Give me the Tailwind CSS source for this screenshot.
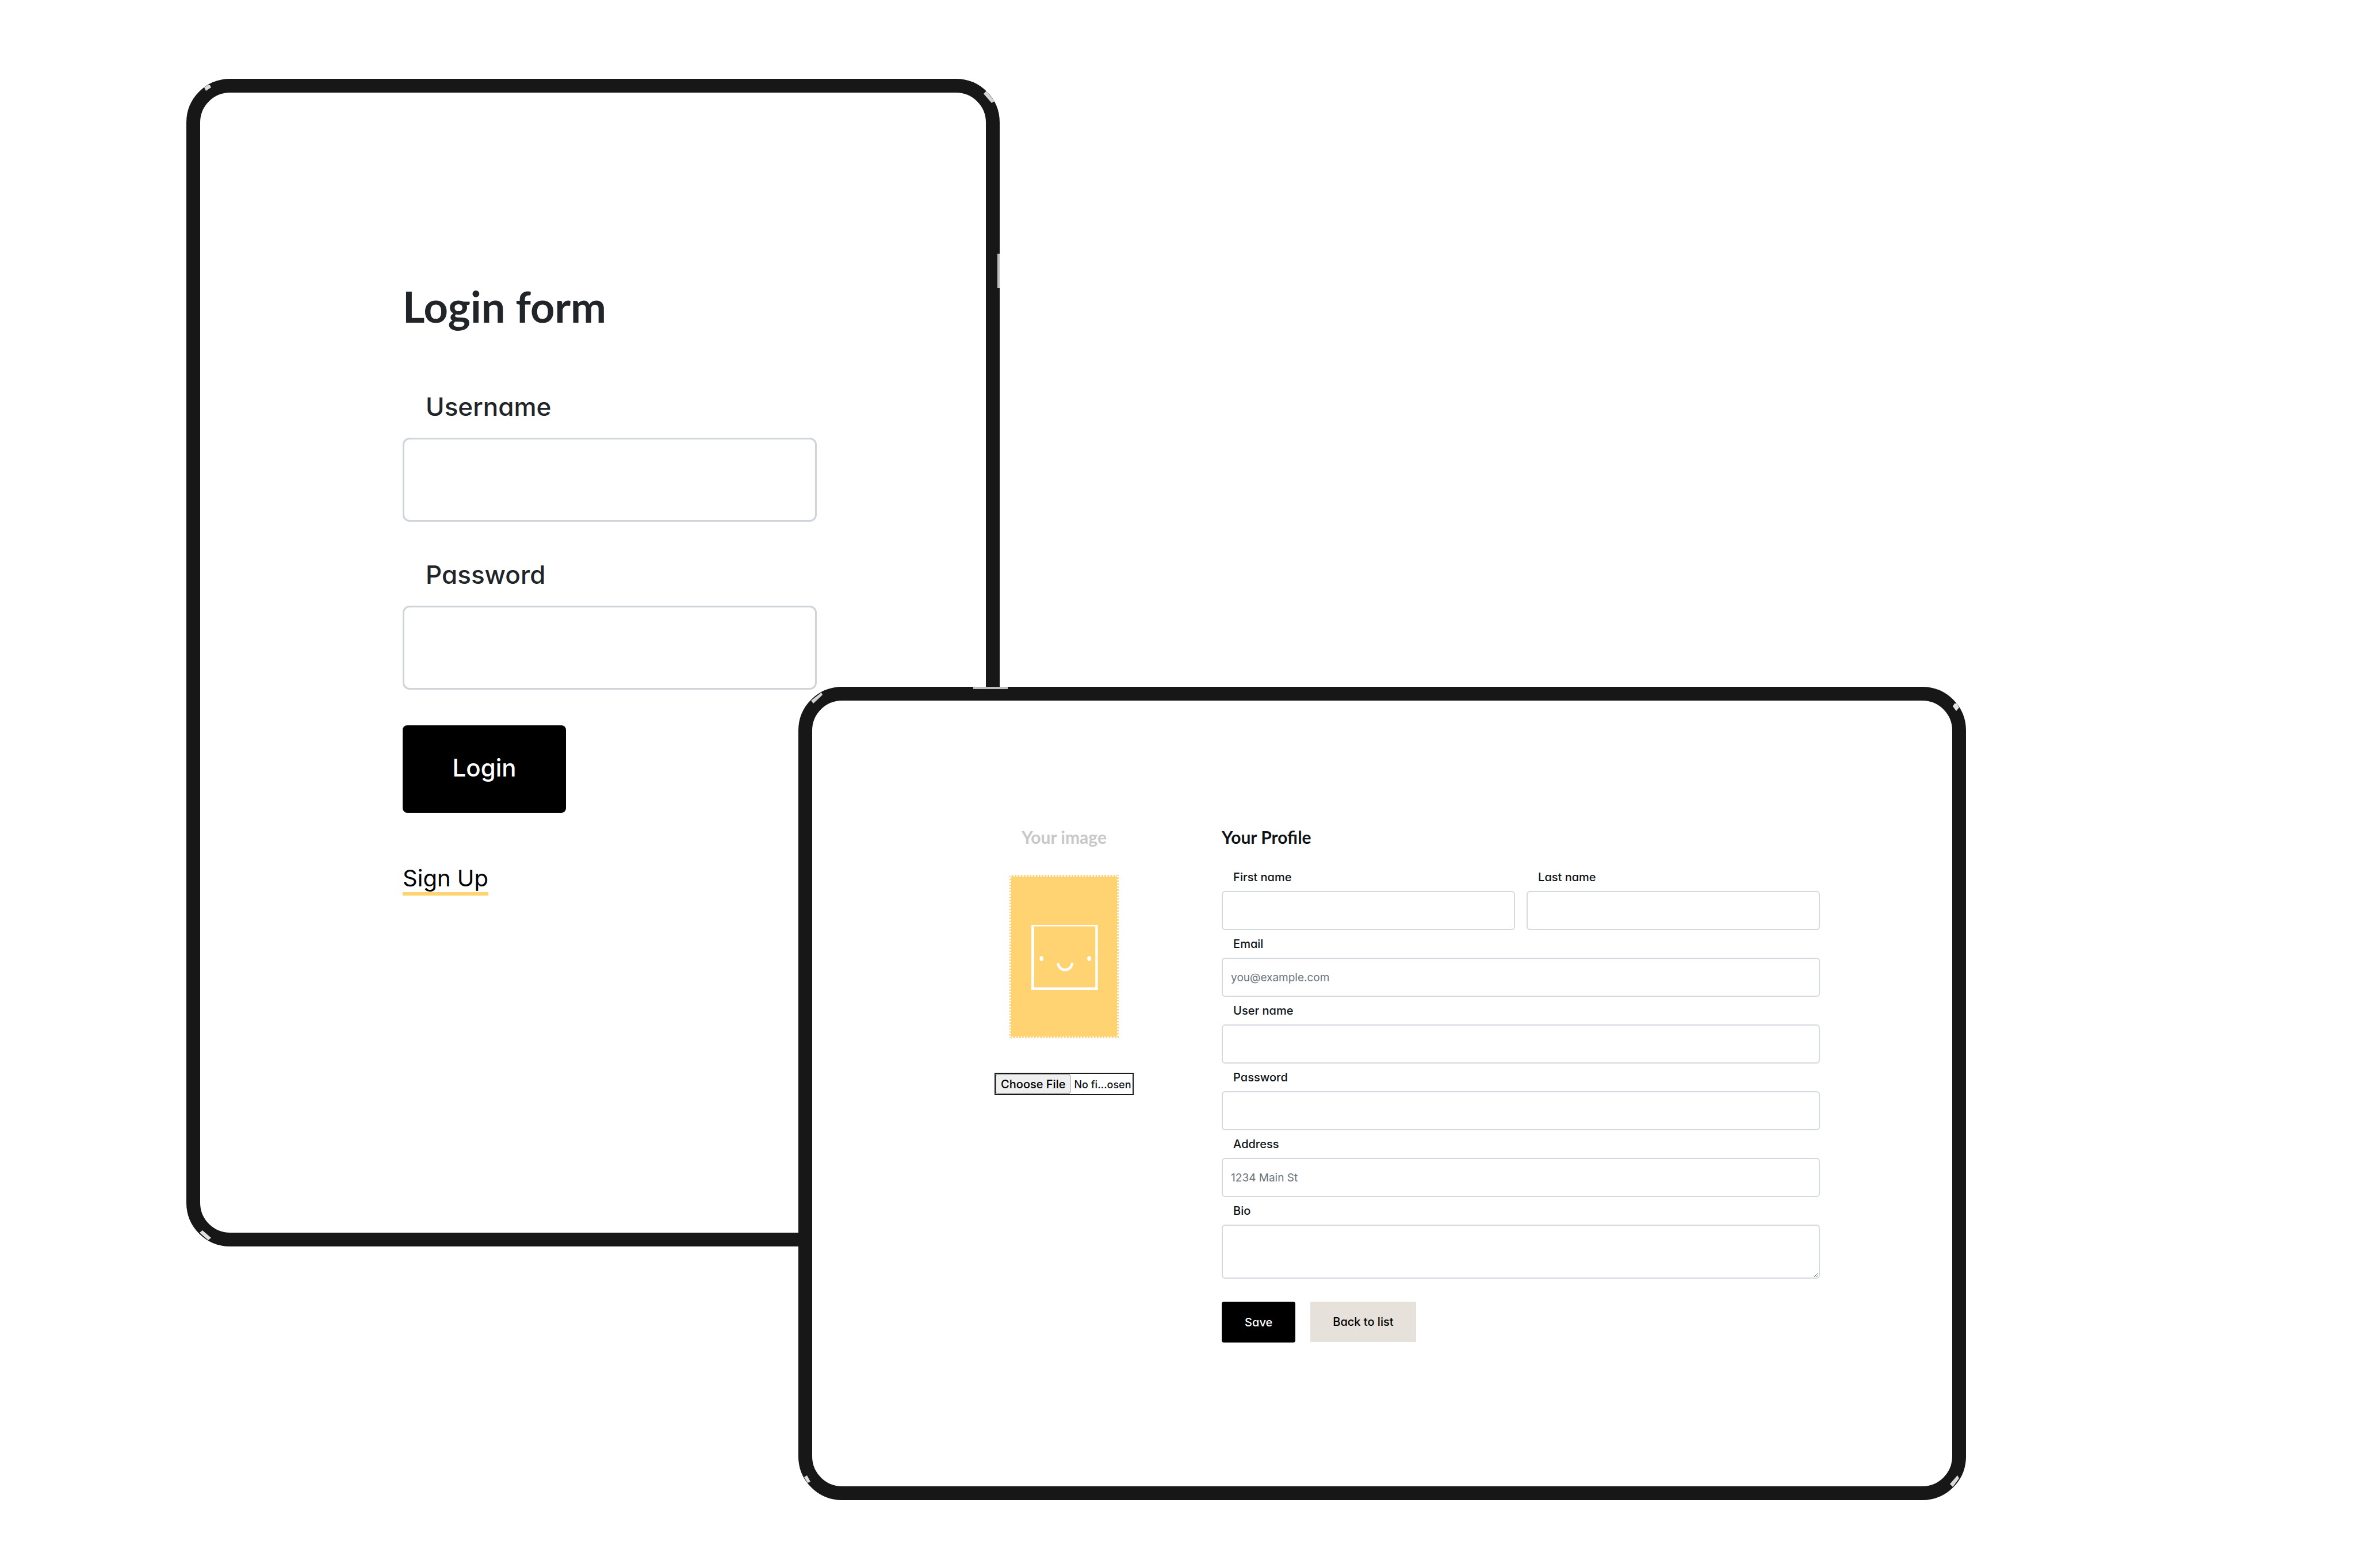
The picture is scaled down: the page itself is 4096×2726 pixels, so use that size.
<!DOCTYPE html>
<html lang="en">
<head>
<meta charset="utf-8">
<title>Login and profile</title>
<script src="https://cdn.jsdelivr.net/npm/@tailwindcss/browser@4"></script>
</head>
<body class="bg-white font-['Inter',sans-serif] font-medium text-[#101418] [font-feature-settings:'cv11']">
<main class="grid min-h-screen grid-cols-[324fr_1064fr_350fr_1680fr_678fr] items-start bg-white">

  <!-- Login screen -->
  <section class="relative col-start-2 col-end-4 row-start-1 mt-[137px] rounded-[76px] border-[24px] border-[#171717] bg-white pt-[324px] pr-[20.800%] pb-[586px] pl-[24.900%]">
    <svg class="absolute -top-6 -left-6 size-[50px]" viewBox="0 0 50 50" aria-hidden="true"><path d="M31 15 37 11 41 11 43 15 34 21Z" fill="#dcdcdc"/></svg>
    <svg class="absolute -top-6 -right-6 size-[50px]" viewBox="0 0 50 50" aria-hidden="true"><path d="M22 26 27 21 41 39 36 42Z" fill="#d5d7d6"/></svg>
    <svg class="absolute -bottom-6 -left-6 size-[50px]" viewBox="0 0 50 50" aria-hidden="true"><path d="M23 26 28 22 43 35 38 39Z" fill="#e2e2e4"/></svg>
    <span class="absolute top-[280px] -right-6 h-[60px] w-1 bg-[#bebcbf]"></span>
    <form class="flex flex-col items-start text-[#212529]">
      <h1 class="font-['Lato',sans-serif] text-[74px] leading-[96px] font-bold">Login form</h1>
      <label for="login-user" class="mt-[102px] pl-10 text-[44px] leading-[48px]">Username</label>
      <input id="login-user" type="text" class="mt-[30px] h-[146px] w-full rounded-xl border-[3px] border-[#ced4da] bg-white px-8 text-[44px]">
      <label for="login-pass" class="mt-[68px] pl-10 text-[44px] leading-[48px]">Password</label>
      <input id="login-pass" type="password" class="mt-[30px] h-[146px] w-full rounded-xl border-[3px] border-[#ced4da] bg-white px-8 text-[44px]">
      <button type="button" class="mt-[62px] h-[152px] w-[284px] rounded-lg bg-black pb-1 text-[42px] leading-[48px] text-white">Login</button>
      <a href="#" class="mt-[90px] border-b-[6px] border-[#ffd372] text-[40px] leading-[48px] font-normal text-black">Sign Up</a>
    </form>
  </section>

  <!-- Profile screen -->
  <section class="relative col-start-3 col-end-5 row-start-1 mt-[1194px] flex items-start rounded-[76px] border-[24px] border-[#171717] bg-white pt-[216px] pb-[250px]">
    <svg class="absolute -top-6 -left-6 size-[50px]" viewBox="0 0 50 50" aria-hidden="true"><path d="M22 24 40 10 42 14 26 29Z" fill="#d5d7d6"/></svg>
    <svg class="absolute -top-6 -right-6 size-[50px]" viewBox="0 0 50 50" aria-hidden="true"><path d="M27 34 30 29 34 29 38 36 33 42Z" fill="#e4e6e5"/></svg>
    <svg class="absolute -right-6 -bottom-6 size-[50px]" viewBox="0 0 50 50" aria-hidden="true"><path d="M22 22 35 7 38 12 27 27Z" fill="#dcdcde"/></svg>
    <svg class="absolute -bottom-6 -left-6 size-[50px]" viewBox="0 0 50 50" aria-hidden="true"><path d="M10 10 15 7 21 18 16 20Z" fill="#dcdfde"/></svg>
    <span class="absolute -top-6 left-[280px] h-1 w-[60px] bg-[#bebcbf]"></span>

    <div class="ml-[16%] flex w-[242px] flex-none flex-col items-center">
      <h2 class="font-['Lato',sans-serif] text-[30px] leading-[42px] font-bold text-[#c8c8c8]">Your image</h2>
      <svg class="mt-[45px] h-[284px] w-[190px]" viewBox="0 0 190 284" role="img" aria-label="Smiling square">
        <rect width="190" height="284" fill="#ffd372"/>
        <rect x="1.500" y="1.500" width="187" height="281" fill="none" stroke="#fff" stroke-width="3" stroke-dasharray="2.600"/>
        <path fill="#fff" fill-rule="evenodd" d="M38 87H153.500V200H38ZM42.800 89.400V195.500H149.300V89.400Z"/>
        <ellipse cx="55.700" cy="145.500" rx="3.300" ry="4.200" fill="#fff"/>
        <ellipse cx="138.500" cy="145.500" rx="3.300" ry="4.200" fill="#fff"/>
        <path d="M84.300 153.500C86 169 107.500 169 109.300 153" fill="none" stroke="#fff" stroke-width="4.400"/>
      </svg>
      <input type="file" aria-label="Choose image" class="mt-[60px] h-[39px] w-full border-2 border-[#1a1a1a] text-[18px] leading-[35px] file:mr-[6px] file:h-[35px] file:rounded-[4px] file:border file:border-solid file:border-[#767676] file:bg-[#efefef] file:px-2 file:text-[20px] file:font-medium file:text-black">
    </div>

    <form class="ml-[153px] mr-[11.600%] min-w-0 flex-1 text-[20px] leading-6">
      <h2 class="font-['Lato',sans-serif] text-[30px] leading-[42px] font-bold">Your Profile</h2>
      <div class="mt-[37px] grid grid-cols-2 gap-x-5 gap-y-3">
        <div class="flex flex-col gap-3">
          <label for="first" class="pl-5">First name</label>
          <input id="first" type="text" class="h-[68px] w-full rounded-md border-2 border-[#d3d9de] px-[14px]">
        </div>
        <div class="flex flex-col gap-3">
          <label for="last" class="pl-5">Last name</label>
          <input id="last" type="text" class="h-[68px] w-full rounded-md border-2 border-[#d3d9de] px-[14px]">
        </div>
        <div class="col-span-2 flex flex-col gap-3">
          <label for="email" class="pl-5">Email</label>
          <input id="email" type="email" placeholder="you@example.com" class="h-[68px] w-full rounded-md border-2 border-[#d3d9de] px-[14px] text-[19px] font-normal [font-feature-settings:normal] placeholder:text-[#6c757d]">
        </div>
        <div class="col-span-2 flex flex-col gap-3">
          <label for="user" class="pl-5">User name</label>
          <input id="user" type="text" class="h-[68px] w-full rounded-md border-2 border-[#d3d9de] px-[14px]">
        </div>
        <div class="col-span-2 flex flex-col gap-3">
          <label for="pass" class="pl-5">Password</label>
          <input id="pass" type="password" class="h-[68px] w-full rounded-md border-2 border-[#d3d9de] px-[14px]">
        </div>
        <div class="col-span-2 flex flex-col gap-3">
          <label for="address" class="pl-5">Address</label>
          <input id="address" type="text" placeholder="1234 Main St" class="h-[68px] w-full rounded-md border-2 border-[#d3d9de] px-[14px] text-[19px] font-normal [font-feature-settings:normal] placeholder:text-[#6c757d]">
        </div>
        <div class="col-span-2 flex flex-col gap-3">
          <label for="bio" class="pl-5">Bio</label>
          <textarea id="bio" class="h-[94px] w-full rounded-md border-2 border-[#d3d9de] px-[14px]"></textarea>
        </div>
      </div>
      <div class="mt-10 flex items-start gap-[26px]">
        <button type="button" class="h-[71px] rounded-sm bg-black px-10 text-white">Save</button>
        <button type="button" class="h-[70px] bg-[#e6e1da] px-[39px] text-black">Back to list</button>
      </div>
    </form>
  </section>
</main>
</body>
</html>
